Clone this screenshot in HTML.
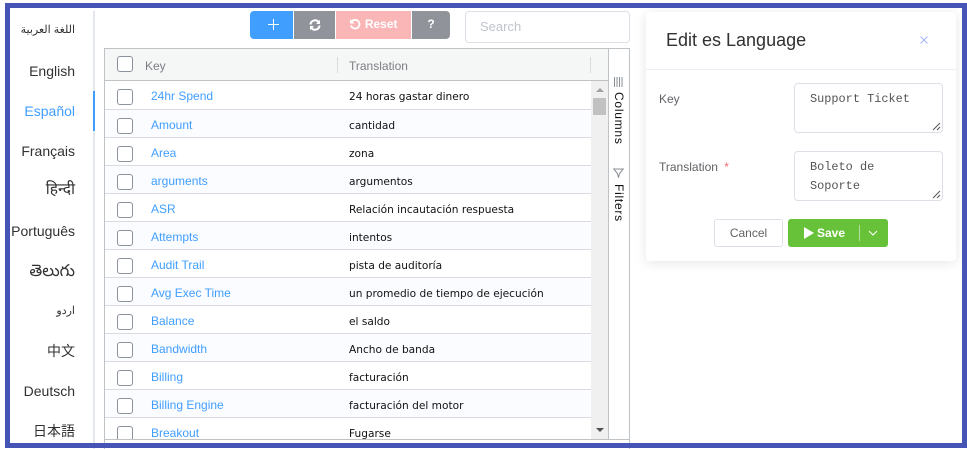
<!DOCTYPE html>
<html><head><meta charset="utf-8">
<style>
*{box-sizing:border-box}
html,body{margin:0;padding:0;background:#fff;width:967px;height:449px;overflow:hidden}
body{position:relative;font-family:"Liberation Sans","Noto Sans CJK SC",sans-serif}
.a{position:absolute}
.lang{position:absolute;right:892px;font-size:14px;line-height:20px;color:#303133;white-space:nowrap}
.row{position:absolute;left:105px;width:486px;border-bottom:1px solid #d9dbde}
.row.alt{background:#fafcff}
.cb{position:absolute;left:117px;width:16px;height:16px;border:1px solid #8c939d;border-radius:3px;background:#fff}
.k{position:absolute;left:151px;font-size:12px;line-height:16px;color:#409eff;white-space:nowrap}
.t{position:absolute;left:349px;line-height:16px;color:#111;white-space:nowrap;font-family:"DejaVu Sans","Liberation Sans",sans-serif;font-size:10.6px;margin-top:1px}
.btn{position:absolute;top:11px;height:28px;color:#fff;text-align:center;font-size:13px;line-height:27px;font-weight:bold}
.vert{position:absolute;writing-mode:vertical-rl;font-size:12px;line-height:14px;color:#111;letter-spacing:.75px}
.ta{position:absolute;left:794px;width:149px;height:50px;border:1px solid #dcdfe6;border-radius:4px;background:#fff;font-family:"Liberation Mono",monospace;font-size:11.9px;line-height:19px;color:#555;padding:6px 15px}
.grip{position:absolute;right:1px;bottom:1px}
.lab{position:absolute;left:659px;font-size:12px;line-height:16px;color:#606266}
</style></head><body>

<!-- left language list -->
<div class="a" style="left:93px;top:11px;width:2px;height:438px;background:#e4e7ed"></div>
<div class="a" style="left:93px;top:91px;width:2px;height:40px;background:#409eff"></div>
<div class="lang" style="top:20px;font-size:11px">اللغة العربية</div>
<div class="lang" style="top:61px">English</div>
<div class="lang" style="top:101px;color:#409eff">Español</div>
<div class="lang" style="top:141px">Français</div>
<div class="lang" style="top:180px;font-size:15.500px">हिन्दी</div>
<div class="lang" style="top:261px;font-size:16.500px;font-family:'DejaVu Sans','Noto Sans CJK SC',sans-serif">తెలుగు</div>
<div class="lang" style="top:221px">Português</div>
<div class="lang" style="top:301px;font-size:11px">اردو</div>
<div class="lang" style="top:341px">中文</div>
<div class="lang" style="top:381px">Deutsch</div>
<div class="lang" style="top:421px;font-family:'Liberation Sans','Noto Sans CJK JP',sans-serif">日本語</div>

<!-- toolbar -->
<div class="btn" style="left:250px;width:43px;background:#409eff;border-radius:4px 0 0 4px">
<svg width="11" height="11" viewBox="0 0 11 11" style="margin:8px 0 0 3px;display:block;margin-left:18px"><path d="M5.500 0V11M0 5.500H11" stroke="#fff" stroke-width="1"/></svg></div>
<div class="btn" style="left:294px;width:41px;background:#909399">
<svg width="12" height="12" viewBox="0 0 12 12" style="margin-top:8px"><path d="M1.500 5.500A4.500 4.500 0 0 1 9.500 3M10.500 6.500A4.500 4.500 0 0 1 2.500 9" fill="none" stroke="#fff" stroke-width="2"/><path d="M11 .8V5H7ZM1 11.200V7H5Z" fill="#fff"/></svg></div>
<div class="btn" style="left:336px;width:75px;background:#fab6b6;font-size:12px;line-height:26px">
<svg width="12" height="12" viewBox="0 0 12 12" style="vertical-align:-2px"><path d="M3 3.200A4.300 4.300 0 1 1 2 7.500" fill="none" stroke="#fff" stroke-width="1.800"/><path d="M1 1V5.500H5.500Z" fill="#fff"/></svg> Reset</div>
<div class="btn" style="left:412px;width:38px;background:#909399;border-radius:0 4px 4px 0;font-size:12px">?</div>
<div class="a" style="left:465px;top:11px;width:165px;height:32px;border:1px solid #dcdfe6;border-radius:4px;background:#fff;color:#c0c4cc;font-size:13px;line-height:29px;padding-left:14px">Search</div>

<!-- grid -->
<div class="a" style="left:104px;top:48px;width:526px;height:401px;border:1px solid #bdc3c7;border-bottom:0"></div>
<div class="a" style="left:105px;top:49px;width:503px;height:31px;background:#f5f7f7"></div>
<div class="a" style="left:105px;top:80px;width:503px;height:1px;background:#bdc3c7"></div>
<div class="a" style="left:608px;top:49px;width:1px;height:390px;background:#bdc3c7"></div>
<div class="a" style="left:337px;top:57px;width:1px;height:16px;background:#d9dcde"></div>
<div class="a" style="left:590px;top:57px;width:1px;height:16px;background:#d9dcde"></div>
<div class="cb" style="top:56px"></div>
<div class="a" style="left:145px;top:58px;font-size:12px;line-height:16px;color:#7b7f85">Key</div>
<div class="a" style="left:349px;top:58px;font-size:12px;line-height:16px;color:#7b7f85">Translation</div>

<div class="row" style="top:81px;height:29px"></div>
<div class="row alt" style="top:110px;height:28px"></div>
<div class="row" style="top:138px;height:28px"></div>
<div class="row alt" style="top:166px;height:28px"></div>
<div class="row" style="top:194px;height:28px"></div>
<div class="row alt" style="top:222px;height:28px"></div>
<div class="row" style="top:250px;height:28px"></div>
<div class="row alt" style="top:278px;height:28px"></div>
<div class="row" style="top:306px;height:28px"></div>
<div class="row alt" style="top:334px;height:28px"></div>
<div class="row" style="top:362px;height:28px"></div>
<div class="row alt" style="top:390px;height:28px"></div>
<div class="row" style="top:418px;height:21px;border-bottom:0"></div>

<div class="cb" style="top:89px"></div><div class="k" style="top:88px">24hr Spend</div><div class="t" style="top:88px">24 horas gastar dinero</div>
<div class="cb" style="top:118px"></div><div class="k" style="top:117px">Amount</div><div class="t" style="top:117px">cantidad</div>
<div class="cb" style="top:146px"></div><div class="k" style="top:145px">Area</div><div class="t" style="top:145px">zona</div>
<div class="cb" style="top:174px"></div><div class="k" style="top:173px">arguments</div><div class="t" style="top:173px">argumentos</div>
<div class="cb" style="top:202px"></div><div class="k" style="top:201px">ASR</div><div class="t" style="top:201px">Relación incautación respuesta</div>
<div class="cb" style="top:230px"></div><div class="k" style="top:229px">Attempts</div><div class="t" style="top:229px">intentos</div>
<div class="cb" style="top:258px"></div><div class="k" style="top:257px">Audit Trail</div><div class="t" style="top:257px">pista de auditoría</div>
<div class="cb" style="top:286px"></div><div class="k" style="top:285px">Avg Exec Time</div><div class="t" style="top:285px">un promedio de tiempo de ejecución</div>
<div class="cb" style="top:314px"></div><div class="k" style="top:313px">Balance</div><div class="t" style="top:313px">el saldo</div>
<div class="cb" style="top:342px"></div><div class="k" style="top:341px">Bandwidth</div><div class="t" style="top:341px">Ancho de banda</div>
<div class="cb" style="top:370px"></div><div class="k" style="top:369px">Billing</div><div class="t" style="top:369px">facturación</div>
<div class="cb" style="top:398px"></div><div class="k" style="top:397px">Billing Engine</div><div class="t" style="top:397px">facturación del motor</div>
<div class="a" style="left:105px;top:418px;width:486px;height:21px;overflow:hidden"><div class="cb" style="left:12px;top:8px"></div><div class="k" style="left:46px;top:7px">Breakout</div><div class="t" style="left:244px;top:7px">Fugarse</div></div>

<!-- scrollbar -->
<div class="a" style="left:591px;top:81px;width:17px;height:358px;background:#f0f0f0"></div>
<div class="a" style="left:593px;top:98px;width:13px;height:17px;background:#c1c1c1"></div>
<div class="a" style="left:596px;top:88px;width:0;height:0;border-left:4px solid transparent;border-right:4px solid transparent;border-bottom:4px solid #a3a3a3"></div>
<div class="a" style="left:596px;top:428px;width:0;height:0;border-left:4px solid transparent;border-right:4px solid transparent;border-top:4px solid #505050"></div>
<div class="a" style="left:105px;top:439px;width:524px;height:1px;background:#bdc3c7"></div>

<!-- side tabs -->
<svg class="a" style="left:613px;top:77px" width="11" height="10" viewBox="0 0 11 10"><path d="M1.500 0V10M4 0V10M6.500 0V10M9 0V10" stroke="#8a8f96" stroke-width="1"/></svg>
<div class="vert" style="left:612px;top:92px">Columns</div>
<svg class="a" style="left:613px;top:168px" width="11" height="11" viewBox="0 0 11 11"><path d="M.8 1H10.200L6.500 5.500L5.500 9.800L4.500 5.500Z" fill="none" stroke="#8a8f96" stroke-width="1"/></svg>
<div class="vert" style="left:612px;top:184px">Filters</div>

<!-- edit panel -->
<div class="a" style="left:646px;top:12px;width:310px;height:249px;background:#fff;border-radius:4px;box-shadow:0 2px 12px rgba(0,0,0,.1)"></div>
<div class="a" style="left:646px;top:69px;width:310px;height:1px;background:#ebeef5"></div>
<div class="a" style="left:666px;top:29px;font-size:18px;line-height:22px;color:#303133">Edit es Language</div>
<svg class="a" style="left:920px;top:36px" width="8" height="8" viewBox="0 0 8 8"><path d="M.5 .5L7.500 7.500M7.500 .5L.5 7.500" stroke="#a3b6f5" stroke-width="1"/></svg>
<div class="lab" style="top:91px">Key</div>
<div class="lab" style="top:159px">Translation <span style="color:#f56c6c;margin-left:3px">*</span></div>
<div class="ta" style="top:83px">Support Ticket<svg class="grip" width="9" height="9" viewBox="0 0 9 9"><path d="M1 8L8 1M5 8L8 5" stroke="#555" stroke-width="1"/></svg></div>
<div class="ta" style="top:151px">Boleto de<br>Soporte<svg class="grip" width="9" height="9" viewBox="0 0 9 9"><path d="M1 8L8 1M5 8L8 5" stroke="#555" stroke-width="1"/></svg></div>
<div class="a" style="left:714px;top:219px;width:69px;height:28px;border:1px solid #dcdfe6;border-radius:3px;background:#fff;text-align:center;font-size:12px;line-height:26px;color:#606266">Cancel</div>
<div class="a" style="left:788px;top:219px;width:100px;height:28px;border-radius:3px;background:#67c23a"></div>
<svg class="a" style="left:804px;top:227px" width="11" height="12" viewBox="0 0 11 12"><path d="M0 0L10 6L0 12Z" fill="#fff"/></svg>
<div class="a" style="left:817px;top:225px;font-size:12px;line-height:16px;color:#fff;font-weight:bold">Save</div>
<div class="a" style="left:859px;top:225px;width:1px;height:16px;background:#b3e19d"></div>
<svg class="a" style="left:868px;top:230px" width="10" height="6" viewBox="0 0 10 6"><path d="M1 1L5 5L9 1" fill="none" stroke="#fff" stroke-width="1"/></svg>

<!-- outer frame -->
<div class="a" style="left:5px;top:3px;width:962px;height:445px;border:5px solid #4655b5;pointer-events:none"></div>
</body></html>
